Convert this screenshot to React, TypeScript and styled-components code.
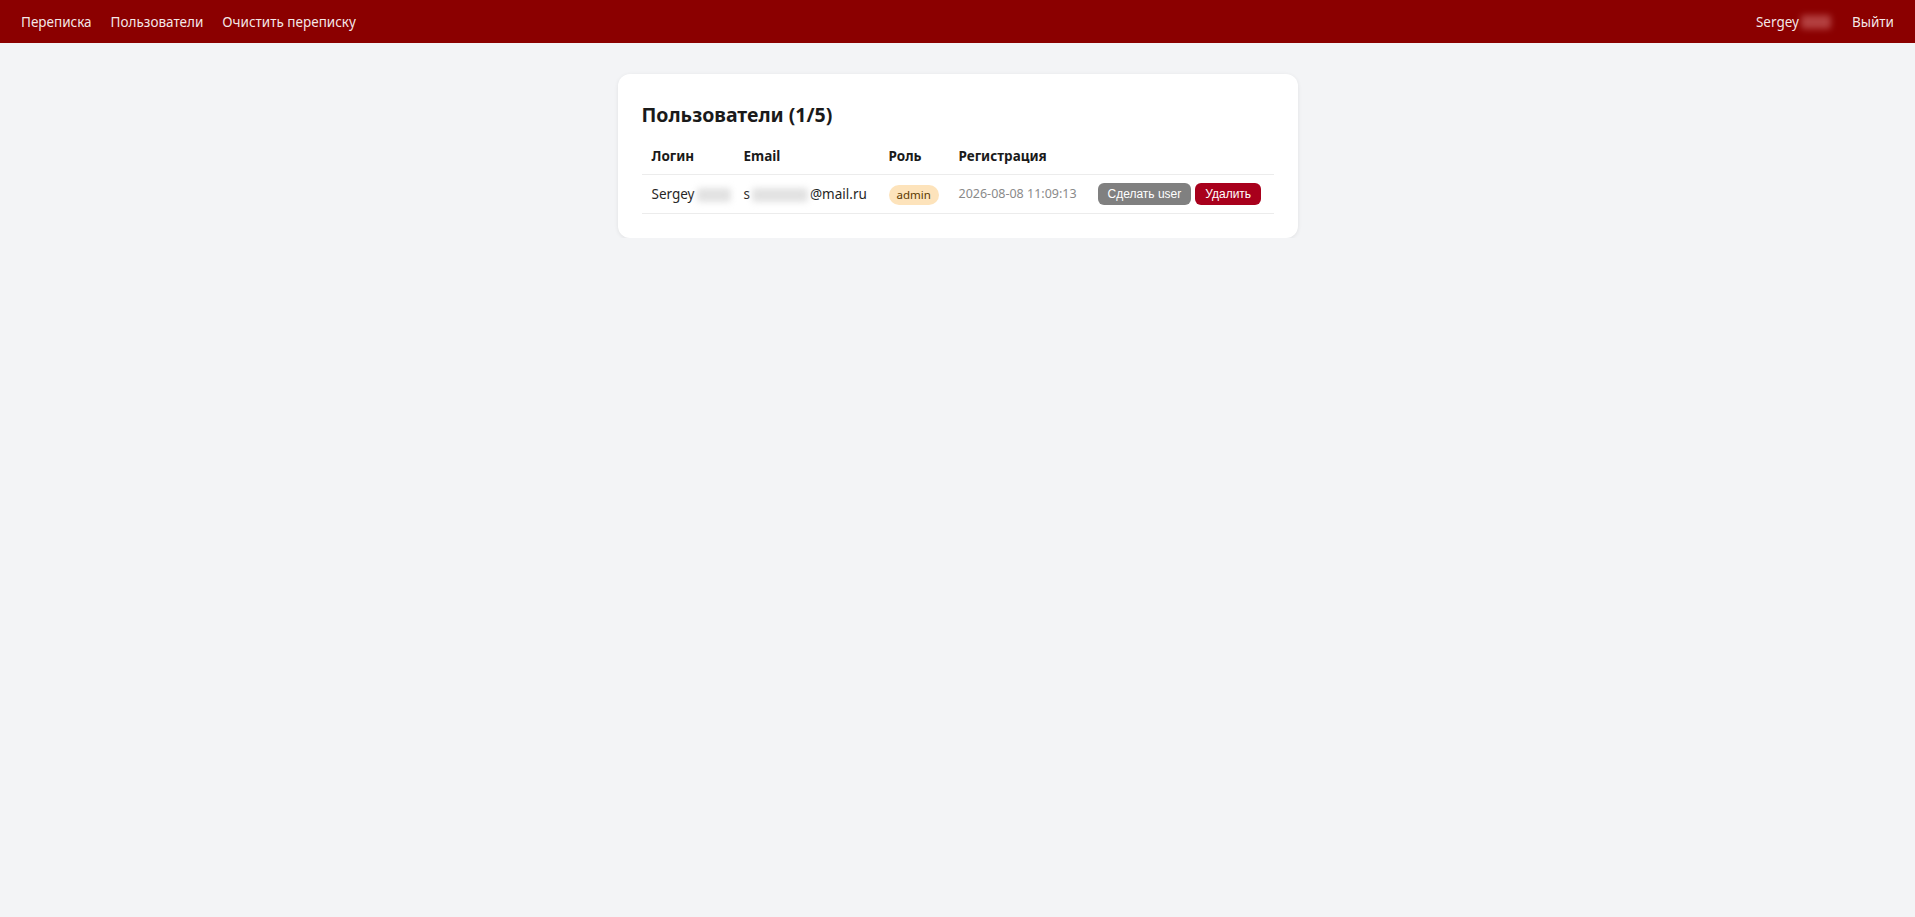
import { createGlobalStyle, styled } from 'styled-components';

const GlobalStyle = createGlobalStyle`
  html, body {
    margin: 0;
    padding: 0;
    background: #f3f4f6;
  }
  body {
    font-family: "Segoe UI", "Noto Sans", "Open Sans", sans-serif;
    font-size: 14px;
    color: #1f1f1f;
  }
`;

type User = {
  login: string;
  emailStart: string;
  emailEnd: string;
  role: string;
  registered: string;
};

const users: User[] = [
  {
    login: 'Sergey',
    emailStart: 's',
    emailEnd: '@mail.ru',
    role: 'admin',
    registered: '2026-08-08 11:09:13',
  },
];

const App = () => {
  return (
    <>
      <GlobalStyle />
      <St.Header>
        <St.Nav>
          <St.NavLink href="#">Переписка</St.NavLink>
          <St.NavLink href="#">Пользователи</St.NavLink>
          <St.NavLink href="#">Очистить переписку</St.NavLink>
        </St.Nav>
        <St.Nav>
          <St.UserName>
            Sergey
            <St.Blur $tone="light" $width={30} />
          </St.UserName>
          <St.NavLink href="#">Выйти</St.NavLink>
        </St.Nav>
      </St.Header>

      <St.Main>
        <St.Card>
          <St.Title>Пользователи (1/5)</St.Title>
          <St.Table>
            <colgroup>
              <col style={{ width: 92 }} />
              <col style={{ width: 145 }} />
              <col style={{ width: 70 }} />
              <col style={{ width: 139 }} />
              <col />
            </colgroup>
            <thead>
              <tr>
                <St.Th>Логин</St.Th>
                <St.Th>Email</St.Th>
                <St.Th>Роль</St.Th>
                <St.Th>Регистрация</St.Th>
                <St.Th></St.Th>
              </tr>
            </thead>
            <tbody>
              {users.map((u) => (
                <tr key={u.login}>
                  <St.Td>
                    {u.login}
                    <St.Blur $tone="gray" $width={34} />
                  </St.Td>
                  <St.Td>
                    {u.emailStart}
                    <St.Blur $tone="gray" $width={56} />
                    {u.emailEnd}
                  </St.Td>
                  <St.Td>
                    <St.Badge>{u.role}</St.Badge>
                  </St.Td>
                  <St.Td $muted>{u.registered}</St.Td>
                  <St.Td>
                    <St.Actions>
                      <St.Button $variant="gray">Сделать user</St.Button>
                      <St.Button $variant="red">Удалить</St.Button>
                    </St.Actions>
                  </St.Td>
                </tr>
              ))}
            </tbody>
          </St.Table>
        </St.Card>
      </St.Main>
    </>
  );
};

export default App;

const St = {
  Header: styled.header`
    display: flex;
    justify-content: space-between;
    align-items: center;

    height: 43px;
    padding: 0 21px;

    background: #8b0000;
  `,
  Nav: styled.nav`
    display: flex;
    align-items: center;
    gap: 19px;
  `,
  NavLink: styled.a`
    color: rgba(255, 255, 255, 0.92);
    font-size: 13.5px;
    text-decoration: none;
  `,
  UserName: styled.span`
    display: flex;
    align-items: center;

    color: rgba(255, 255, 255, 0.92);
    font-size: 13.5px;
  `,
  Blur: styled.span<{ $tone: 'light' | 'gray'; $width: number }>`
    display: inline-block;
    vertical-align: middle;

    width: ${({ $width }) => $width}px;
    height: 14px;
    margin: 0 2px;

    background: ${({ $tone }) =>
      $tone === 'light' ? 'rgba(255, 180, 180, 0.35)' : '#e2e2e2'};
    border-radius: 3px;
    filter: blur(3px);
  `,
  Main: styled.main`
    padding-top: 31px;
  `,
  Card: styled.section`
    width: 680px;
    margin: 0 auto;
    padding: 24px;
    box-sizing: border-box;

    background: #ffffff;
    border-radius: 12px;
    box-shadow: 0 1px 4px rgba(0, 0, 0, 0.08);
  `,
  Title: styled.h2`
    margin: 5px 0 12px;

    font-size: 19.5px;
    font-weight: 700;
    line-height: 24px;
    color: #1a1a1a;
  `,
  Table: styled.table`
    width: 100%;
    border-collapse: collapse;
    table-layout: fixed;
  `,
  Th: styled.th`
    padding: 8px 10px;

    font-size: 13.5px;
    font-weight: 700;
    line-height: 19px;
    text-align: left;
    color: #1a1a1a;

    border-bottom: 1px solid #ececec;
  `,
  Td: styled.td<{ $muted?: boolean }>`
    padding: 8px 10px;
    white-space: nowrap;

    font-size: ${({ $muted }) => ($muted ? '12.5px' : '13.5px')};
    line-height: 22px;
    color: ${({ $muted }) => ($muted ? '#8a8a8a' : '#262626')};

    border-bottom: 1px solid #ececec;
  `,
  Badge: styled.span`
    display: inline-block;

    padding: 0 8px;

    font-size: 11.5px;
    line-height: 20px;
    color: #5c3a00;

    background: #fde3bb;
    border-radius: 999px;
  `,
  Actions: styled.div`
    display: flex;
    gap: 4px;
  `,
  Button: styled.button<{ $variant: 'gray' | 'red' }>`
    height: 22px;
    padding: 0 10px;

    font-family: "Liberation Sans", Arial, sans-serif;
    font-size: 12px;
    color: #ffffff;

    background: ${({ $variant }) => ($variant === 'red' ? '#a8001c' : '#808080')};
    border: none;
    border-radius: 6px;
    cursor: pointer;
  `,
};
